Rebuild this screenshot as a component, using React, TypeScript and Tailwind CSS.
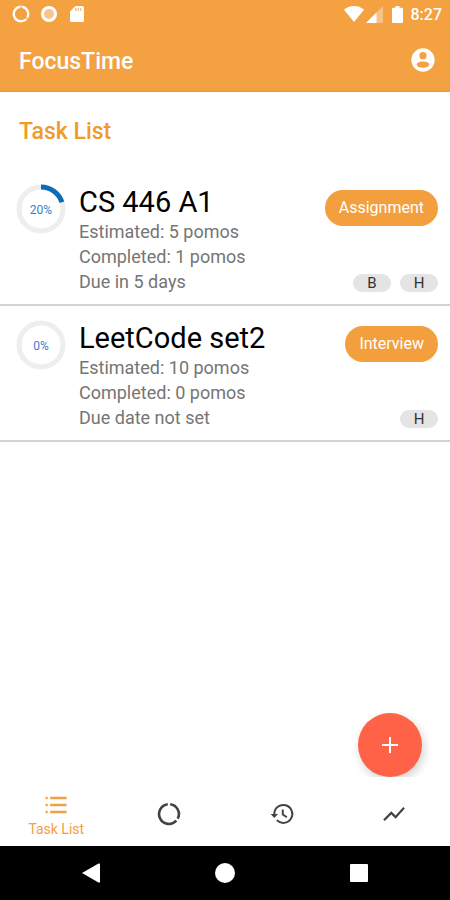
import type { ReactNode } from 'react';

interface Task {
  name: string;
  estimated: number;
  completed: number;
  due: string;
  category: string;
  tags: string[];
}

const tasks: Task[] = [
  { name: 'CS 446 A1', estimated: 5, completed: 1, due: 'Due in 5 days', category: 'Assignment', tags: ['B', 'H'] },
  { name: 'LeetCode set2', estimated: 10, completed: 0, due: 'Due date not set', category: 'Interview', tags: ['H'] },
];

function Icon({ children, className }: { children: ReactNode; className: string }) {
  return (
    <svg viewBox="0 0 24 24" fill="currentColor" aria-hidden="true" className={className}>
      {children}
    </svg>
  );
}

function StatusBar() {
  return (
    <div className="flex h-7 items-center justify-between pl-3 pr-2 text-white">
      <div className="flex items-center gap-[10px]">
        <svg viewBox="0 0 18 18" className="size-[18px]" fill="none" stroke="currentColor" aria-hidden="true">
          <circle cx="9" cy="9" r="7.500" strokeWidth="1.800" strokeOpacity=".6" />
          <path d="M10.200 1.900A7.200 7.200 0 0 1 15.400 12.200M13.900 14.300A7.200 7.200 0 1 1 7.800 1.900" strokeWidth="2.200" />
        </svg>
        <svg viewBox="0 0 18 18" className="size-[18px]" fill="currentColor" aria-hidden="true">
          <circle cx="9" cy="9" r="8" />
          <circle cx="9" cy="9" r="5" fill="#f8c48c" />
        </svg>
        <svg viewBox="0 0 18 18" className="size-[18px]" fill="currentColor" aria-hidden="true">
          <path d="M7.500 1H14a2 2 0 0 1 2 2v12.500a1.500 1.500 0 0 1-1.500 1.500h-11A1.500 1.500 0 0 1 2 15.500V6.500z" />
          <path d="M7 3h1.500v3H7zM9.500 3H11v3H9.500zM12 3h1.500v3H12z" fill="#f8c48c" />
        </svg>
      </div>
      <div className="flex items-center">
        <svg viewBox="0 0 20 16" className="h-4 w-5" fill="currentColor" aria-hidden="true">
          <path d="M10 16 0 3.800C2.500 1.500 6 0 10 0s7.500 1.500 10 3.800z" />
        </svg>
        <svg viewBox="0 0 17 17" className="ml-[2px] size-[17px]" fill="currentColor" aria-hidden="true">
          <path d="M0 17 17 0v17z" opacity=".35" />
          <path d="M0 17 10.500 6.500V17z" />
        </svg>
        <svg viewBox="0 0 11 17" className="ml-[9px] h-[17px] w-[11px]" fill="currentColor" aria-hidden="true">
          <path d="M3.500 0h4v1.700H10a1 1 0 0 1 1 1V16a1 1 0 0 1-1 1H1a1 1 0 0 1-1-1V2.700a1 1 0 0 1 1-1h2.500z" />
        </svg>
        <span className="ml-2 pt-[2px] text-base font-medium leading-7">8:27</span>
      </div>
    </div>
  );
}

function ProgressRing({ percent }: { percent: number }) {
  return (
    <svg viewBox="0 0 50 50" className="size-[50px] shrink-0" role="img" aria-label={`${percent}% completed`}>
      <circle cx="25" cy="25" r="22" fill="none" stroke="#eeeeee" strokeWidth="5" />
      {percent > 0 && (
        <circle
          cx="25"
          cy="25"
          r="22"
          fill="none"
          stroke="#0f6db8"
          strokeWidth="5"
          pathLength="100"
          strokeDasharray={`${percent} 100`}
          transform="rotate(-90 25 25)"
        />
      )}
      <text x="25" y="30" textAnchor="middle" fontSize="12" fill="#3f7cc4">
        {percent}%
      </text>
    </svg>
  );
}

function TaskRow({ task }: { task: Task }) {
  return (
    <li className="flex gap-[13px] border-b-2 border-[#d2d2d2] pb-[10px] pl-4 pr-3">
      <div className="pt-[14px]">
        <ProgressRing percent={Math.round((task.completed / task.estimated) * 100)} />
      </div>
      <div className="min-w-0 flex-1 pt-4 text-lg leading-[25px] text-[#757575]">
        <h2 className="pb-px text-[29px] leading-8 text-black">{task.name}</h2>
        <p>Estimated: {task.estimated} pomos</p>
        <p>Completed: {task.completed} pomos</p>
        <p>{task.due}</p>
      </div>
      <div className="flex flex-col items-end justify-between pb-[2px] pt-5">
        <span className="rounded-full bg-[#f39f3d] px-[14px] text-base leading-9 text-white">{task.category}</span>
        <div className="flex gap-[9px]">
          {task.tags.map((tag) => (
            <span key={tag} className="w-[38px] rounded-full bg-[#e4e4e4] text-center text-[15px] leading-[18px] text-[#333333]">
              {tag}
            </span>
          ))}
        </div>
      </div>
    </li>
  );
}

function BottomNav() {
  return (
    <nav className="relative grid h-[69px] grid-cols-4 bg-white text-[#424242]">
      <button type="button" aria-current="page" className="flex flex-col items-center justify-center pt-[6px] text-[#f0a040]">
        <Icon className="size-7">
          <path d="M4 10.900c-.6 0-1.100.5-1.100 1.100s.5 1.100 1.100 1.100 1.100-.5 1.100-1.100-.5-1.100-1.100-1.100zM4 4.900C3.400 4.900 2.900 5.400 2.900 6S3.400 7.100 4 7.100 5.100 6.600 5.100 6 4.600 4.900 4 4.900zM4 16.900c-.6 0-1.100.5-1.100 1.100s.5 1.100 1.100 1.100 1.100-.5 1.100-1.100-.5-1.100-1.100-1.100zM7 19h14v-2H7v2zm0-6h14v-2H7v2zm0-8v2h14V5H7z" />
        </Icon>
        <span className="text-sm leading-5">Task List</span>
      </button>
      <button type="button" aria-label="Timer" className="flex items-center justify-center pt-1">
        <svg viewBox="0 0 24 24" className="size-6" fill="none" stroke="currentColor" strokeWidth="2.600" aria-hidden="true">
          <path d="M13.200 2.200A9.900 9.900 0 0 1 20.700 16.700" />
          <path d="M19.300 18.700A9.900 9.900 0 1 1 10.800 2.200" />
        </svg>
      </button>
      <button type="button" aria-label="History" className="flex items-center justify-center pl-[2px] pt-1">
        <svg viewBox="0 0 24 24" className="size-[26px]" fill="none" stroke="currentColor" strokeWidth="1.800" aria-hidden="true">
          <path d="M4.900 13.500V12a8.300 8.300 0 1 1 2.300 5.700" />
          <path d="M12.700 7.800v4.700l3.800 2.500" />
          <path d="M1.500 12h6.800l-3.400 3.800z" fill="currentColor" stroke="none" />
        </svg>
      </button>
      <button type="button" aria-label="Statistics" className="flex items-center justify-center pt-1">
        <Icon className="size-[26px]">
          <path d="M3.500 18.490l6-6.010 4 4L22 6.920l-1.410-1.410-7.090 7.970-4-4L2 16.990z" />
        </Icon>
      </button>
    </nav>
  );
}

function SystemBar() {
  return (
    <div className="grid h-[54px] grid-cols-3 bg-black px-6 text-white">
      <button type="button" aria-label="Back" className="flex items-center justify-center">
        <svg viewBox="0 0 18 20" className="h-5 w-[18px]" fill="currentColor" aria-hidden="true">
          <path d="M0 10 16.500.5Q18 0 18 1.500v17q0 1.500-1.500 1z" />
        </svg>
      </button>
      <button type="button" aria-label="Home" className="flex items-center justify-center">
        <span className="size-5 rounded-full bg-white" />
      </button>
      <button type="button" aria-label="Recent apps" className="flex items-center justify-center">
        <span className="size-[18px] rounded-[1px] bg-white" />
      </button>
    </div>
  );
}

export default function App() {
  return (
    <div className="flex min-h-screen flex-col bg-white font-[Roboto,sans-serif]">
      <header className="border-b border-[#f09a24] bg-[#f4a142]">
        <StatusBar />
        <div className="flex h-[63px] items-center justify-between pl-[19px] pr-[13px] text-white">
          <h1 className="pt-1 text-[23px] font-medium leading-7">FocusTime</h1>
          <button type="button" aria-label="Account">
            <Icon className="size-7">
              <path
                fillRule="evenodd"
                d="M12 2a10 10 0 1 0 0 20 10 10 0 0 0 0-20zm0 3.200a3.100 3.100 0 1 1 0 6.200 3.100 3.100 0 0 1 0-6.200zm0 8c2.700 0 5.400 1 5.400 2.700S14.700 18.700 12 18.700s-5.400-1.100-5.400-2.800 2.700-2.700 5.400-2.700z"
              />
            </Icon>
          </button>
        </div>
      </header>

      <main className="flex flex-1 flex-col">
        <h2 className="px-[19px] pb-6 pt-[26px] text-[23px] font-medium leading-7 text-[#f09a2a]">Task List</h2>
        <ul>
          {tasks.map((task) => (
            <TaskRow key={task.name} task={task} />
          ))}
        </ul>
        <button
          type="button"
          aria-label="Add task"
          className="mr-7 mt-auto flex size-16 items-center justify-center self-end rounded-full bg-[#ff6247] text-white shadow-[2px_4px_10px_rgba(0,0,0,0.18)]"
        >
          <svg viewBox="0 0 16 16" className="size-4" stroke="currentColor" strokeWidth="2" aria-hidden="true">
            <path d="M8 0v16M0 8h16" />
          </svg>
        </button>
      </main>

      <BottomNav />
      <SystemBar />
    </div>
  );
}
